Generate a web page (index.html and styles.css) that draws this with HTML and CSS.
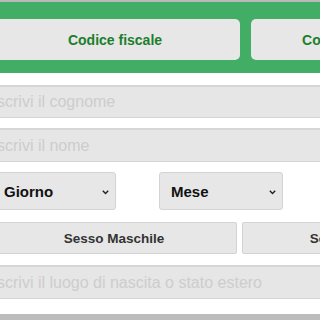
FILE: index.html
```html
<!DOCTYPE html>
<html lang="it">
<head>
<meta charset="utf-8">
<link rel="stylesheet" href="styles.css">
</head>
<body>
<div class="topbar"></div>
<div class="header">
  <button class="tab">Codice fiscale</button>
  <button class="tab">Codice fiscale inverso</button>
</div>
<div class="form">
  <input class="field f1" type="text" placeholder="scrivi il cognome">
  <input class="field f2" type="text" placeholder="scrivi il nome">
  <div class="selects">
    <div class="select"><span>Giorno</span><svg class="chev" width="7" height="5" viewBox="0 0 7 5"><path d="M0.8 0.8 L3.5 3.6 L6.2 0.8" fill="none" stroke="#222" stroke-width="1.4"/></svg></div>
    <div class="select"><span>Mese</span><svg class="chev" width="7" height="5" viewBox="0 0 7 5"><path d="M0.8 0.8 L3.5 3.6 L6.2 0.8" fill="none" stroke="#222" stroke-width="1.4"/></svg></div>
  </div>
  <div class="sex">
    <button class="sexbtn">Sesso Maschile</button>
    <button class="sexbtn">Sesso Femminile</button>
  </div>
  <input class="field f3" type="text" placeholder="scrivi il luogo di nascita o stato estero">
</div>
<div class="bottombar"></div>
</body>
</html>
```
FILE: styles.css
```css
html, body {
  margin: 0;
  padding: 0;
  background: #ffffff;
}
body {
  width: 320px;
  height: 320px;
  overflow: hidden;
  font-family: "Liberation Sans", Arial, sans-serif;
}
.topbar {
  height: 2px;
  background: #b9b9b9;
}
.header {
  background: #42ad64;
  padding: 17px 0 13px;
  margin-left: -10px;
  width: 700px;
  display: flex;
  gap: 11px;
}
.tab {
  flex: none;
  width: 250px;
  height: 41px;
  border: none;
  border-radius: 5px;
  background: #e7e7e7;
  color: #1b7e2d;
  font-family: "Liberation Sans", Arial, sans-serif;
  font-weight: bold;
  font-size: 14px;
  padding: 0;
}
.form {
  padding-top: 12px;
  display: flex;
  flex-direction: column;
}
.field {
  display: block;
  box-sizing: border-box;
  margin: 0 0 0 -20px;
  width: 400px;
  height: 34px;
  border: 1px solid #d5d5d5;
  border-top: 2px solid #d6d6d6;
  background: #e6e6e6;
  padding: 0 0 0 16px;
  font-family: "Liberation Sans", Arial, sans-serif;
  font-size: 16px;
  color: #333;
  outline: none;
}
.field::placeholder {
  color: #cdcdcd;
}
.f1 {
  height: 33px;
  margin-bottom: 10px;
}
.f2 {
  margin-bottom: 10px;
}
.selects {
  display: flex;
  gap: 43px;
  margin-left: -8px;
  margin-bottom: 12px;
}
.select {
  box-sizing: border-box;
  width: 124px;
  height: 38px;
  border: 1px solid #d3d3d3;
  border-radius: 3px;
  background: #e7e7e7;
  display: flex;
  align-items: center;
  justify-content: space-between;
  padding: 0 6px 0 11px;
  font-weight: bold;
  font-size: 15px;
  color: #111;
}
.chev {
  display: block;
  margin-top: 2px;
}
.sex {
  display: flex;
  gap: 5px;
  margin-left: -9px;
  margin-bottom: 11px;
}
.sexbtn {
  flex: none;
  box-sizing: border-box;
  width: 246px;
  height: 32px;
  border: 1px solid #d3d3d3;
  border-radius: 2px;
  background: #e7e7e7;
  color: #333;
  font-family: "Liberation Sans", Arial, sans-serif;
  font-weight: bold;
  font-size: 13.5px;
  padding: 0;
}
.bottombar {
  margin-top: 15px;
  height: 10px;
  background: #bcbcbc;
}
```
